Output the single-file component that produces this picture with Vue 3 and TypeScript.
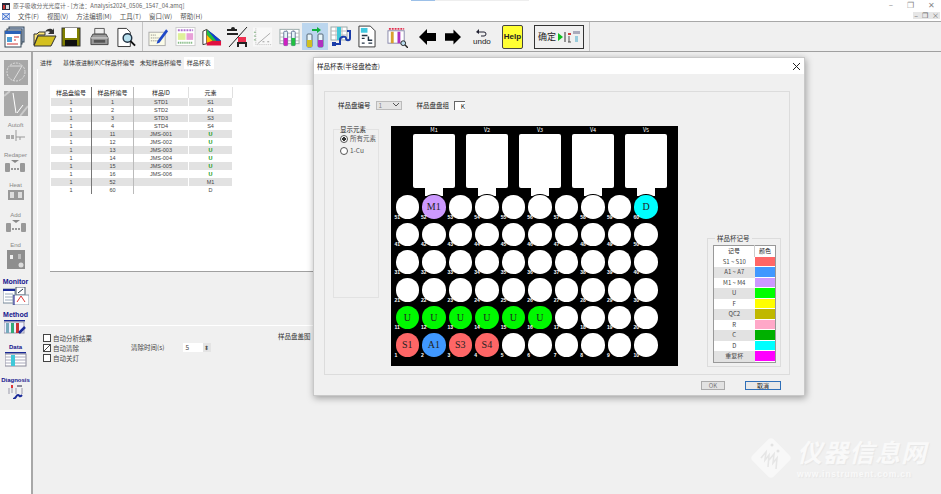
<script setup lang="ts">
interface SampleRow {
  tray: string;
  cup: string;
  id: string;
  type: string;
}

interface Well {
  no: number;
  mark: string;
  color: string;
}

const tabs = ["进样", "基体液进制(K)C样品杯编号", "未知样品杯编号", "样品杯表"];
const menus = ["文件(F)", "视图(V)", "方法编辑(M)", "工具(T)", "窗口(W)", "帮助(H)"];
const racks = ["M1", "V2", "V3", "V4", "V5"];

const rows: SampleRow[] = [
  { tray: "1", cup: "1", id: "STD1", type: "S1" },
  { tray: "1", cup: "2", id: "STD2", type: "A1" },
  { tray: "1", cup: "3", id: "STD3", type: "S3" },
  { tray: "1", cup: "4", id: "STD4", type: "S4" },
  { tray: "1", cup: "11", id: "JMS-001", type: "U" },
  { tray: "1", cup: "12", id: "JMS-002", type: "U" },
  { tray: "1", cup: "13", id: "JMS-003", type: "U" },
  { tray: "1", cup: "14", id: "JMS-004", type: "U" },
  { tray: "1", cup: "15", id: "JMS-005", type: "U" },
  { tray: "1", cup: "16", id: "JMS-006", type: "U" },
  { tray: "1", cup: "52", id: "", type: "M1" },
  { tray: "1", cup: "60", id: "", type: "D" },
];

const legend = [
  { name: "S1 ~ S10", color: "#ff6666" },
  { name: "A1 ~ A7", color: "#4098ff" },
  { name: "M1 ~ M4", color: "#cc99ff" },
  { name: "U", color: "#00ff00" },
  { name: "F", color: "#ffff00" },
  { name: "QC2", color: "#c0b800" },
  { name: "R", color: "#ffa8c8" },
  { name: "C", color: "#00b000" },
  { name: "D", color: "#00ffff" },
  { name: "重复杯", color: "#ff00ff" },
];

const marks: Record<number, { mark: string; color: string }> = {
  1: { mark: "S1", color: "#ff6666" },
  2: { mark: "A1", color: "#4098ff" },
  3: { mark: "S3", color: "#ff6666" },
  4: { mark: "S4", color: "#ff6666" },
  11: { mark: "U", color: "#00f800" },
  12: { mark: "U", color: "#00f800" },
  13: { mark: "U", color: "#00f800" },
  14: { mark: "U", color: "#00f800" },
  15: { mark: "U", color: "#00f800" },
  16: { mark: "U", color: "#00f800" },
  52: { mark: "M1", color: "#cc99ff" },
  60: { mark: "D", color: "#00ffff" },
};

// top row is 51..60, bottom row is 1..10
const wells: Well[] = [];
for (let r = 5; r >= 0; r--) {
  for (let c = 1; c <= 10; c++) {
    const no = r * 10 + c;
    wells.push({ no, mark: marks[no]?.mark ?? "", color: marks[no]?.color ?? "#fff" });
  }
}
</script>

<template>
  <div class="app">
    <div class="titlebar">
      <svg class="app-icon" viewBox="0 0 8 7"><rect width="8" height="7" fill="#2a2a3a" /><rect x="1" y="2" width="2" height="4" fill="#c33" /><rect x="4" y="2" width="3" height="4" fill="#ddd" /></svg>
      <span class="title-text">原子吸收分光光度计 - [方法：Analysis2024_0506_1547_04.amq]</span>
      <span class="title-tab"></span>
      <div class="win-btns"><span>–</span><span>❐</span><span>✕</span></div>
    </div>
    <div class="menubar">
      <svg class="menu-icon" viewBox="0 0 8 7"><rect width="8" height="7" fill="#dfe6f5" stroke="#36c" /><path d="M1 1l6 5M7 1L1 6" stroke="#36c" /></svg>
      <span v-for="m in menus" :key="m">{{ m }}</span>
      <div class="mdi-btns"><span>–</span><span>❐</span><span>×</span></div>
    </div>

    <div class="toolbar">
      <svg viewBox="0 0 22 22" width="22" height="22"><rect x="5" y="1" width="15" height="15" fill="#b8cbe8" stroke="#345" /><rect x="3" y="3" width="15" height="15" fill="#d5dff0" stroke="#345" /><rect x="1" y="5" width="16" height="16" fill="#fff" stroke="#345" /><rect x="1" y="5" width="16" height="3" fill="#2b62b8" /><rect x="3" y="11" width="5" height="5" fill="#4aa0d8" /><path d="M10 11h5M10 14h2M3 18h11" stroke="#c33" /></svg>
      <svg viewBox="0 0 24 22" width="24" height="22"><path d="M1 8h3l2-2h6v3H5L1 19z" fill="#ffe97a" stroke="#333" /><path d="M1 20l4-10h18l-5 10z" fill="#d4c020" stroke="#333" /><path d="M12 6c2-4 6-4 8-2l1-2v6h-6l2-2c-1-1-3-1-5 0z" fill="#333" /></svg>
      <svg viewBox="0 0 20 22" width="20" height="22"><rect x="1" y="2" width="18" height="18" fill="#808000" stroke="#333" /><rect x="4" y="2" width="12" height="10" fill="#fff" /><rect x="4" y="14" width="12" height="6" fill="#111" /></svg>
      <svg viewBox="0 0 20 22" width="19" height="22"><path d="M5 2h10v6H5z" fill="#eee" stroke="#555" /><path d="M3 8h14l2 4v7H1v-7z" fill="#999" stroke="#444" /><rect x="4" y="14" width="12" height="3" fill="#555" /><path d="M1 12h18" stroke="#ddd" /></svg>
      <svg viewBox="0 0 22 22" width="21" height="22"><path d="M2 2h9l4 4v15H2z" fill="#fff" stroke="#333" /><circle cx="12" cy="12" r="4.5" fill="#b8e0ee" stroke="#234" stroke-width="1.5" /><path d="M15 15l5 5" stroke="#111" stroke-width="2" /></svg>
      <i class="tool-sep"></i>
      <svg viewBox="0 0 22 22" width="21" height="22"><rect x="1" y="6" width="17" height="14" fill="#fbfbe8" stroke="#aaa" /><path d="M3 9h6M3 12h9M3 15h8" stroke="#777" stroke-dasharray="1 1" /><path d="M10 15L19 3l2 2-9 12-3 1z" fill="#1f49c8" /></svg>
      <svg viewBox="0 0 22 22" width="21" height="22"><rect x="1" y="1" width="20" height="19" fill="#fff" stroke="#ccc" /><path d="M3 4h16" stroke="#b070d0" stroke-width="2" stroke-dasharray="2 1" /><rect x="3" y="7" width="8" height="7" fill="#dff09a" /><rect x="12" y="7" width="7" height="7" fill="#e8a0d8" /><path d="M3 17h16" stroke="#6a6" stroke-width="2" stroke-dasharray="1 1" /></svg>
      <svg viewBox="0 0 22 22" width="21" height="22"><path d="M2 5l4-2v15l-4 1z" fill="#fff" stroke="#333" /><path d="M6 3l15 12v5H6z" fill="#e01040" /><path d="M6 3l15 12H12L6 9z" fill="#20c040" /><path d="M6 3l7 5 8 7h-5z" fill="#1040d0" /><path d="M6 9l6 6-6 2z" fill="#ffc000" /></svg>
      <svg viewBox="0 0 22 22" width="22" height="22"><rect x="1" y="3" width="10" height="2" fill="#222" /><rect x="1" y="7" width="11" height="2" fill="#222" /><circle cx="7" cy="3" r="2" fill="#222" /><path d="M21 1L3 21" stroke="#222" /><rect x="12" y="11" width="8" height="5" fill="#ee3050" /><rect x="11" y="16" width="10" height="2" fill="#222" /><path d="M12 18v3M20 18v3" stroke="#222" stroke-width="2" /></svg>
      <svg viewBox="0 0 22 22" width="21" height="22"><rect x="1" y="1" width="20" height="20" fill="#f8f8f8" /><path d="M4 2v17h16" fill="none" stroke="#bbb" stroke-dasharray="1 1" /><path d="M6 18L19 7" stroke="#aaa" /><path d="M2 6h2M2 10h2M2 14h2" stroke="#7a7" /><path d="M11 16h2M16 16h2" stroke="#999" /></svg>
      <svg viewBox="0 0 22 22" width="21" height="22"><rect x="1" y="3" width="20" height="15" fill="#fff" stroke="#9aa" /><path d="M1 7h20M1 11h20M1 15h20M8 3v15M15 3v15" stroke="#bbb" /><rect x="5" y="5" width="4" height="15" rx="1" fill="#e8f4f8" stroke="#679" /><rect x="5" y="12" width="4" height="8" fill="#d020c0" /><rect x="13" y="5" width="4" height="15" rx="1" fill="#e8f4f8" stroke="#679" /><rect x="13" y="12" width="4" height="8" fill="#20c040" /></svg>
      <div class="tool-active">
        <svg viewBox="0 0 22 22" width="22" height="22"><path d="M8 3h5V1l4 3-4 3V5H8z" fill="#10b040" /><rect x="3" y="8" width="5" height="13" rx="1" fill="#e8f4f8" stroke="#567" /><rect x="3" y="14" width="5" height="7" fill="#d0c020" /><rect x="14" y="8" width="5" height="13" rx="1" fill="#e8f4f8" stroke="#567" /><rect x="14" y="14" width="5" height="7" fill="#b030c0" /></svg>
      </div>
      <svg viewBox="0 0 22 22" width="22" height="22"><rect x="1" y="1" width="16" height="13" fill="#fff" stroke="#9aa" /><path d="M1 5h16M1 9h16M6 1v13M12 1v13" stroke="#bbb" /><rect x="7" y="1" width="4" height="13" fill="#40c8d8" /><path d="M17 5h3v7c0 3-4 3-4 0 0-2-6-2-6 2v4H5" fill="none" stroke="#1a3ca8" stroke-width="2" /><rect x="2" y="16" width="4" height="4" fill="#1a3ca8" /></svg>
      <svg viewBox="0 0 19 24" width="18" height="23"><path d="M1 1h12l5 5v17H1z" fill="#fff" stroke="#333" /><rect x="3" y="3" width="7" height="5" fill="#40c8e0" /><path d="M4 11h6M4 14h3M11 12v4h4M4 19h3M11 19h4" fill="none" stroke="#234" stroke-width="1.5" /></svg>
      <svg viewBox="0 0 22 24" width="21" height="23"><path d="M2 4h16" stroke="#e03050" stroke-width="2" stroke-dasharray="2 1" /><rect x="1" y="6" width="17" height="13" fill="#fff" stroke="#88a" /><rect x="4" y="7" width="3" height="12" fill="#d8a030" /><rect x="11" y="7" width="3" height="12" fill="#b030c0" /><circle cx="17" cy="19" r="2.5" fill="#bde" stroke="#222" /><path d="M19 21l3 3" stroke="#222" stroke-width="1.5" /></svg>
      <svg viewBox="0 0 17 18" width="17" height="18"><path d="M0 9l8-8v4h9v8H8v4z" fill="#000" /></svg>
      <svg viewBox="0 0 17 18" width="16" height="18"><path d="M17 9L9 1v4H0v8h9v4z" fill="#000" /></svg>
      <div class="undo">
        <svg viewBox="0 0 12 10" width="12" height="10"><path d="M3 5h5a2 2 0 0 1 0 4H5" fill="none" stroke="#223" /><path d="M3 2v5L0 5z" fill="#223" /></svg>
        <span>undo</span>
      </div>
      <div class="help">Help</div>
      <div class="confirm">
        <span>确定</span>
        <svg viewBox="0 0 22 14" width="22" height="14"><path d="M0 3l5 4-5 4z" fill="#10c020" /><path d="M7 2v10" stroke="#333" /><rect x="10" y="3" width="3" height="2" fill="#d04040" /><path d="M11 6v6M10 12h3" stroke="#555" /><rect x="15" y="1" width="7" height="3" fill="#aab" /><rect x="17" y="6" width="3" height="6" fill="#9cd" /></svg>
      </div>
      <i class="tool-sep"></i>
    </div>

    <div class="body">
      <aside class="sidebar">
        <div class="side-top">
          <svg class="side-box" viewBox="0 0 24 25"><rect width="24" height="25" fill="#a8a8a8" /><circle cx="12" cy="12" r="9" fill="none" stroke="#ddd" stroke-dasharray="2 1" /><path d="M6 6h12L9 21" fill="none" stroke="#ddd" /></svg>
          <svg class="side-box" viewBox="0 0 24 25"><rect width="24" height="25" fill="#a8a8a8" /><path d="M0 5L6 0M16 25L24 15" stroke="#ccc" stroke-width="2" /><path d="M9 2l3 20M13 22l6-8" stroke="#fff" /></svg>
          <div class="side-item"><span>Autoft</span>
            <svg viewBox="0 0 20 11" width="20" height="11"><rect y="5" width="4" height="4" fill="#aaa" /><rect x="5" y="5" width="3" height="4" fill="#aaa" /><path d="M10 0v11M10 7h9M14 7v3" stroke="#999" /></svg>
          </div>
          <div class="side-item"><span>Redaper</span>
            <svg viewBox="0 0 22 12" width="22" height="12"><path d="M7 0h8l-4 3z" fill="#888" /><rect x="1" y="3" width="5" height="9" rx="1" fill="#999" /><rect x="16" y="3" width="5" height="9" rx="1" fill="#999" /><path d="M7 9h8" stroke="#999" stroke-width="2" stroke-dasharray="2 1" /></svg>
          </div>
          <div class="side-item"><span>Heat</span>
            <svg viewBox="0 0 16 10" width="16" height="10"><rect width="16" height="10" fill="#999" /><rect x="2" y="2" width="4" height="6" fill="#ddd" /><rect x="10" y="2" width="4" height="6" fill="#ddd" /></svg>
          </div>
          <div class="side-item"><span>Add</span>
            <svg viewBox="0 0 22 12" width="22" height="12"><path d="M7 0h8l-4 3z" fill="#888" /><rect x="1" y="3" width="5" height="9" rx="1" fill="#999" /><rect x="16" y="3" width="5" height="9" rx="1" fill="#999" /><path d="M7 9h8" stroke="#999" stroke-width="2" stroke-dasharray="2 1" /></svg>
          </div>
          <div class="side-item"><span>End</span>
            <svg viewBox="0 0 18 19" width="18" height="19"><rect width="18" height="19" fill="#8e8e8e" /><rect x="3" y="5" width="3" height="4" fill="#eee" /><rect x="11" y="4" width="3" height="5" fill="#bbb" /><circle cx="14" cy="15" r="2.5" fill="#ddd" /></svg>
          </div>
        </div>
        <div class="side-blue">
          <div class="side-item"><b>Monitor</b>
            <svg viewBox="0 0 26 18" width="26" height="18"><rect y="2" width="12" height="14" fill="#fff" stroke="#789" /><rect y="2" width="12" height="2" fill="#1a2a98" /><path d="M2 7h8M2 10h8M2 13h8" stroke="#9ab" /><rect x="13" y="0" width="9" height="8" fill="#fff" stroke="#456" /><path d="M15 6l5-4" stroke="#234" /><rect x="10" y="8" width="16" height="10" fill="#fff" stroke="#89a" /><path d="M14 15l4-6 4 6" fill="none" stroke="#d33" /><path d="M11 8v10" stroke="#118" /></svg>
          </div>
          <div class="side-item"><b>Method</b>
            <svg viewBox="0 0 22 14" width="22" height="14"><rect y="0" width="21" height="1.5" fill="#1a2a98" /><rect y="2" width="20" height="11" fill="#eef" stroke="#99a" /><rect x="2" y="3" width="3" height="10" fill="#7ab" /><rect x="7" y="3" width="3" height="10" fill="#3a7" /><rect x="12" y="3" width="3" height="10" fill="#c33" /><path d="M15 13l6-6" stroke="#1a2a98" stroke-width="2.5" /></svg>
          </div>
          <div class="side-item"><b class="small">Data</b>
            <svg viewBox="0 0 22 15" width="22" height="15"><rect y="0" width="21" height="1.5" fill="#1a2a98" /><rect y="2" width="21" height="12" fill="#fff" stroke="#889" /><path d="M0 5h21M0 8h21M0 11h21" stroke="#aab" /><rect x="6" y="3" width="4" height="11" fill="#40c8d8" /></svg>
          </div>
          <div class="side-item"><b class="small">Diagnosis</b>
            <svg viewBox="0 0 16 14" width="16" height="14"><rect x="3" y="0" width="2" height="3" fill="#d33" /><rect x="9" y="0" width="5" height="2" fill="#889" /><path d="M1 3v6M4 3v5M8 3v6M14 3v6" stroke="#99a" /><path d="M5 14c3 0 3-4 5-4s1 3 4 0" fill="none" stroke="#1a2a98" stroke-width="2" /></svg>
          </div>
        </div>
        <div class="side-foot"></div>
      </aside>

      <main class="workspace">
        <div class="tabs">
          <span v-for="(t, i) in tabs" :key="t" class="tab" :class="{ active: i === 3 }">{{ t }}</span>
        </div>
        <div class="tab-panel">
          <div class="table-wrap">
            <table class="cups">
              <thead>
                <tr><th>样品盘编号</th><th>样品杯编号</th><th>样品ID</th><th>元素</th></tr>
              </thead>
              <tbody>
                <tr v-for="r in rows" :key="r.cup">
                  <td>{{ r.tray }}</td>
                  <td>{{ r.cup }}</td>
                  <td>{{ r.id }}</td>
                  <td :class="{ green: r.type === 'U' }">{{ r.type }}</td>
                </tr>
              </tbody>
            </table>
          </div>
        </div>
        <div class="options">
          <div class="checks">
            <label><i class="check"></i>自动分析结果</label>
            <label><i class="check on"></i>自动清除</label>
            <label><i class="check"></i>自动关灯</label>
          </div>
          <div class="clear-time">
            <span>清除时间(s)</span>
            <div class="spin"><span>5</span><i>⬍</i></div>
          </div>
          <span class="cap-label">样品盘盖图</span>
        </div>
      </main>
    </div>

    <!-- modal over the main window -->
    <section class="dialog">
      <header class="dlg-title">
        <span>样品杯表(半径盘检查)</span>
        <svg viewBox="0 0 7 7" width="7" height="7"><path d="M0 0l7 7M7 0L0 7" stroke="#222" /></svg>
      </header>
      <div class="dlg-body">
        <div class="dlg-group">
          <div class="dlg-form">
            <span>样品盘编号</span>
            <div class="combo"><span>1</span><svg viewBox="0 0 6 4" width="6" height="4"><path d="M0 0l3 3 3-3" fill="none" stroke="#555" /></svg></div>
            <span class="gap-label">样品盘盘组</span>
            <div class="small-input">K</div>
          </div>
          <div class="dlg-main">
            <fieldset class="elements">
              <legend>显示元素</legend>
              <label><i class="radio on"></i>所有元素</label>
              <label><i class="radio"></i>1-Cu</label>
            </fieldset>
            <div class="board">
              <div class="racks">
                <div v-for="r in racks" :key="r" class="rack">
                  <span>{{ r }}</span>
                  <i class="rack-body"></i>
                  <i class="rack-neck"></i>
                </div>
              </div>
              <div class="wells">
                <div v-for="w in wells" :key="w.no" class="well" :style="{ background: w.color }">
                  {{ w.mark }}
                  <span class="well-no">{{ w.no }}</span>
                </div>
              </div>
            </div>
            <fieldset class="legend-box">
              <legend>样品杯记号</legend>
              <table class="legend-table">
                <thead><tr><th>记号</th><th>颜色</th></tr></thead>
                <tbody>
                  <tr v-for="l in legend" :key="l.name">
                    <td>{{ l.name }}</td>
                    <td class="swatch" :style="{ background: l.color }"></td>
                  </tr>
                </tbody>
              </table>
            </fieldset>
          </div>
        </div>
        <div class="dlg-buttons">
          <button type="button" class="btn ok" disabled>OK</button>
          <button type="button" class="btn primary">取消</button>
        </div>
      </div>
    </section>

    <div class="watermark">
      <svg class="wm-logo" viewBox="0 0 44 44" width="44" height="44">
        <rect x="7" y="7" width="30" height="30" rx="4" transform="rotate(45 22 22)" fill="#f8f8f8" />
        <path d="M12 22l5-6-1 8 4-5-1 12M20 24l5-6-1 9 4-5-1 11" fill="none" stroke="#e6e6e6" stroke-width="1.6" />
        <circle cx="23" cy="9" r="1.5" fill="#e2e2e2" />
        <circle cx="29" cy="15" r="1.5" fill="#e2e2e2" />
      </svg>
      <div class="wm-text">
        <strong>仪器信息网</strong>
        <span>www.instrument.com.cn</span>
      </div>
    </div>
  </div>
</template>

<style>
html,
body {
  margin: 0;
  background: #f0f0f0;
}
</style>

<style scoped>
.app {
  position: relative;
  width: 941px;
  height: 494px;
  overflow: hidden;
  background: #f0f0f0;
  color: #222;
  font: 6.5px/1 "Noto Sans CJK SC", "Noto Sans", sans-serif;
}

.titlebar {
  position: relative;
  display: flex;
  align-items: center;
  gap: 3px;
  height: 12px;
  padding-left: 2px;
  background: #fff;
  color: #666;
  font-size: 5.9px;
}

.app-icon,
.menu-icon {
  width: 8px;
  height: 7px;
  flex: none;
}

.title-tab {
  position: absolute;
  top: 0;
  left: 411px;
  width: 118px;
  height: 1px;
  background: linear-gradient(90deg, #9cc0e8 20%, #eee 20%);
}

.win-btns {
  position: absolute;
  top: 1px;
  right: 6px;
  display: flex;
  gap: 14px;
  color: #888;
  font-size: 8px;
}

.menubar {
  position: relative;
  display: flex;
  align-items: center;
  gap: 8px;
  height: 9px;
  padding-left: 2px;
  background: #fff;
  color: #555;
}

.mdi-btns {
  position: absolute;
  top: 0;
  right: 1px;
  display: flex;
  gap: 4px;
  padding: 0 1px;
  background: #e6e6e6;
  color: #666;
  font-size: 7px;
}

.toolbar {
  display: grid;
  grid-template-columns: 29px 28px 29px 26px 26px 6px 27px 26px 25px 26px 27px 23px 28px 28px 29px 32px 26px 28px 29px 32px 55px 6px;
  align-items: center;
  justify-items: start;
  height: 29px;
  padding-left: 4px;
  border-top: 1px solid #a8a8a8;
  border-bottom: 1px solid #a0a0a0;
}

.tool-sep {
  width: 1px;
  height: 29px;
  background: #c4c4c4;
}

.tool-active {
  display: flex;
  align-items: center;
  justify-content: center;
  width: 26px;
  height: 27px;
  background: #bcd6ee;
}

.undo {
  display: flex;
  flex-direction: column;
  align-items: center;
  gap: 1px;
  font: 8px/1 "Liberation Sans", sans-serif;
}

.help {
  width: 21px;
  height: 24px;
  border: 1px solid #444;
  border-radius: 2px;
  background: #ffff33;
  font: bold 8px/22px "Liberation Sans", sans-serif;
  text-align: center;
  box-sizing: border-box;
}

.confirm {
  display: flex;
  align-items: center;
  justify-content: center;
  gap: 2px;
  width: 50px;
  height: 24px;
  box-sizing: border-box;
  border: 1px solid #333;
  font-size: 9px;
}

.body {
  display: flex;
  height: 442px;
}

.sidebar {
  display: flex;
  flex-direction: column;
  flex: none;
  width: 31px;
  border-right: 2px solid #a8a8a8;
  color: #888;
}

.side-top {
  display: flex;
  flex-direction: column;
  align-items: center;
  height: 226px;
  padding-top: 8px;
  box-sizing: border-box;
}

.side-box {
  width: 24px;
  height: 25px;
  flex: none;
  margin-bottom: 6px;
}

.side-item {
  display: flex;
  flex-direction: column;
  align-items: center;
  gap: 2px;
  height: 30px;
  font-family: "Liberation Sans", sans-serif;
  font-size: 6px;
}

.side-item svg {
  flex: none;
}

.side-blue {
  display: flex;
  flex-direction: column;
  align-items: center;
  height: 132px;
  color: #14148c;
}

.side-blue .side-item {
  height: 33.5px;
}

.side-blue b {
  font-size: 7px;
}

.side-blue b.small {
  font-size: 6px;
}

.side-foot {
  flex: 1;
  background: #fff;
}

.workspace {
  flex: 1;
  padding: 5px 0 0 4px;
}

.tabs {
  display: flex;
  align-items: flex-end;
  gap: 5px;
  height: 12px;
  padding-left: 3px;
  font-size: 6px;
}

.tab {
  padding: 3px 0;
  color: #333;
}

.tab:first-child {
  margin-right: 6px;
}

.tab.active {
  margin-left: -3px;
  padding: 3px 3px 3px;
  background: #fff;
}

.tab-panel {
  width: 400px;
  height: 257px;
  box-sizing: border-box;
  padding: 16px 0 0 12px;
  border-left: 1px solid #fff;
  border-bottom: 1px solid #fff;
}

.table-wrap {
  height: 187px;
  box-sizing: border-box;
  padding: 2px 0 0 1px;
  border-bottom: 1px solid #a0a0a0;
  background: #fff;
}

.cups {
  width: 182px;
  border-collapse: collapse;
  table-layout: fixed;
  text-align: center;
  font-family: "Liberation Sans", "Noto Sans CJK SC", sans-serif;
  font-size: 5.5px;
}

.cups th {
  height: 11px;
  padding: 0;
  font: 6px/1 "Noto Sans CJK SC", sans-serif;
  border-right: 1px solid #e0e0e0;
}

.cups td {
  height: 8px;
  padding: 0;
  line-height: 8px;
  border-right: 1px solid #fff;
  color: #444;
}

.cups tr:nth-child(odd) td {
  background: #e2e2e2;
}

.cups th:first-child,
.cups td:first-child {
  width: 40px;
  border-right: 1px solid #777;
}

.cups th:nth-child(2),
.cups td:nth-child(2) {
  width: 41px;
  border-right-color: #bbb;
}

.cups th:nth-child(3) {
  width: 54px;
}

.cups .green {
  color: #0a9a0a;
  font-weight: bold;
}

.options {
  display: flex;
  padding: 8px 0 0 6px;
}

.checks {
  display: flex;
  flex-direction: column;
  gap: 2px;
  width: 88px;
  color: #444;
}

.checks label {
  display: flex;
  align-items: center;
  gap: 2px;
  height: 8px;
}

.check {
  width: 6px;
  height: 6px;
  border: 1px solid #444;
  background: #fff;
}

.check.on {
  background: linear-gradient(135deg, #fff 45%, #444 45%, #444 55%, #fff 55%);
}

.clear-time {
  display: flex;
  align-items: center;
  gap: 19px;
  height: 9px;
  margin-top: 9px;
  width: 147px;
  color: #444;
}

.spin {
  display: flex;
  align-items: center;
  justify-content: space-between;
  width: 28px;
  height: 9px;
  padding-left: 2px;
  box-sizing: border-box;
  background: linear-gradient(90deg, #fff 70%, #e4e4e4 70%);
}

.spin i {
  font-style: normal;
  font-size: 6px;
  color: #555;
  padding-right: 2px;
}

.cap-label {
  margin-top: -1px;
  color: #333;
}

.dialog {
  position: absolute;
  top: 57px;
  left: 313px;
  display: flex;
  flex-direction: column;
  width: 492px;
  height: 339px;
  border: 1px solid #c8c8c8;
  box-sizing: border-box;
  background: #f0f0f0;
  box-shadow: 1px 2px 7px rgba(0, 0, 0, 0.35);
}

.dlg-title {
  display: flex;
  align-items: center;
  justify-content: space-between;
  flex: none;
  height: 16px;
  padding: 0 4px 0 3px;
  background: #fff;
}

.dlg-body {
  display: flex;
  flex-direction: column;
  flex: 1;
  padding: 17px 14px 0 10px;
}

.dlg-group {
  height: 284px;
  box-sizing: border-box;
  padding: 8px 8px 0 9px;
  border: 1px solid #dcdcdc;
}

.dlg-form {
  display: flex;
  align-items: center;
  height: 10px;
  padding-left: 4px;
}

.combo {
  display: flex;
  align-items: center;
  justify-content: space-between;
  width: 26px;
  height: 9px;
  margin-left: 5px;
  padding: 0 2px;
  box-sizing: border-box;
  border: 1px solid #bbb;
  background: #e4e4e4;
  color: #888;
}

.gap-label {
  margin-left: 15px;
}

.small-input {
  width: 11px;
  height: 9px;
  margin-left: 5px;
  box-sizing: border-box;
  border: 1px solid #666;
  border-width: 1px 0 0 1px;
  background: #fff;
  text-align: right;
  line-height: 9px;
}

.dlg-main {
  display: flex;
  align-items: flex-start;
  margin-top: 16px;
}

.elements {
  width: 48px;
  height: 172px;
  margin: 0 10px 0 -1px;
  padding: 0 0 0 5px;
  box-sizing: border-box;
  border: 1px solid #e2e2e2;
}

.elements legend {
  padding: 0;
  margin-left: 1px;
}

.elements label {
  display: flex;
  align-items: center;
  gap: 2px;
  height: 12px;
  margin-left: 1px;
  color: #555;
}

.radio {
  width: 6px;
  height: 6px;
  border: 1px solid #555;
  border-radius: 50%;
  background: #fff;
}

.radio.on {
  background: radial-gradient(circle, #333 45%, #fff 50%);
}

.board {
  flex: none;
  width: 287px;
  height: 240px;
  margin-left: 2px;
  background: #000;
}

.racks {
  display: flex;
  gap: 11px;
  height: 70px;
  padding-left: 22px;
}

.rack {
  display: flex;
  flex-direction: column;
  align-items: center;
  width: 42px;
  color: #fff;
  font-size: 5.5px;
  line-height: 8px;
}

.rack-body {
  width: 42px;
  height: 54px;
  flex: none;
  border-radius: 2px;
  background: #fff;
}

.rack-neck {
  width: 18px;
  height: 8px;
  flex: none;
  background: #fff;
}

.wells {
  display: grid;
  grid-template-columns: repeat(10, 26.55px);
  grid-auto-rows: 27.7px;
  margin-top: -1px;
  padding-left: 4.5px;
}

.well {
  position: relative;
  display: flex;
  align-items: center;
  justify-content: center;
  width: 23.5px;
  height: 23.5px;
  border-radius: 50%;
  box-shadow: 0 0 0 1px #000;
  color: #222;
  font: 10px/1 "Liberation Serif", serif;
}

.well-no {
  position: absolute;
  bottom: -1px;
  left: -1px;
  color: #fff;
  font: bold 5px/1 "Liberation Sans", sans-serif;
}

.legend-box {
  flex: none;
  width: 74px;
  height: 132px;
  margin: 109px 0 0 29px;
  padding: 0 4px 0 5px;
  box-sizing: border-box;
  border: 1px solid #dcdcdc;
}

.legend-box legend {
  padding: 0 2px;
  margin-left: 2px;
  color: #333;
}

.legend-table {
  width: 63px;
  margin-top: 3px;
  border-collapse: collapse;
  border: 1px solid #999;
  background: #fff;
  table-layout: fixed;
  text-align: center;
  font-size: 6px;
}

.legend-table th {
  height: 11px;
  padding: 0;
  font-weight: normal;
}

.legend-table th:last-child {
  width: 20px;
  border-left: 1px solid #ccc;
}

.legend-table td {
  height: 10.5px;
  padding: 0;
  color: #444;
  line-height: 8px;
}

.legend-table tr:nth-child(even) td:first-child {
  background: #e2e2e2;
}

.swatch {
  box-shadow: inset 0 -1px 0 #fff;
}

.dlg-buttons {
  display: flex;
  justify-content: flex-end;
  gap: 20px;
  margin-top: 6px;
  padding-right: 9px;
}

.btn {
  width: 36px;
  height: 9px;
  padding: 0;
  border: 1px solid #aaa;
  background: #e2e2e2;
  color: #777;
  font: 6px/1 "Noto Sans CJK SC", sans-serif;
}

.btn.ok {
  width: 24px;
}

.btn.primary {
  border-color: #2f6fb8;
  background: #e8e8e8;
  color: #222;
}

.watermark {
  position: absolute;
  top: 436px;
  left: 749px;
  display: flex;
  gap: 4px;
  pointer-events: none;
}

.wm-logo {
  flex: none;
}

.wm-text {
  display: flex;
  flex-direction: column;
  gap: 4px;
  color: #f9f9f9;
  text-shadow: 1px 1px 1px #e6e6e6;
}

.wm-text strong {
  font: italic bold 25px/30px "Noto Sans CJK SC", sans-serif;
  letter-spacing: 1px;
}

.wm-text span {
  font: bold 8.5px/1 "Liberation Sans", sans-serif;
  letter-spacing: 0.8px;
}
</style>
